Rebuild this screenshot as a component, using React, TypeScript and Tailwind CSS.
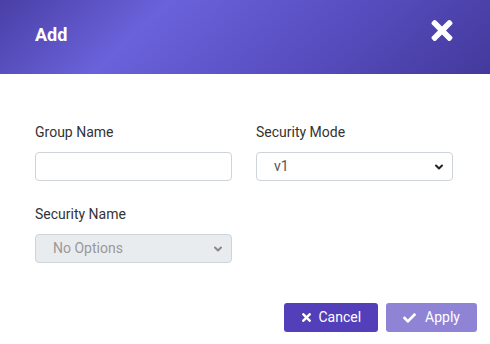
import { ChevronDown } from 'lucide-react';

function TimesIcon({ className }: { className?: string }) {
  return (
    <svg viewBox="0 80 352 352" className={className} fill="currentColor">
      <path d="M242.72 256l100.07-100.07c12.28-12.28 12.280-32.19 0-44.48l-22.24-22.24c-12.28-12.28-32.19-12.28-44.48 0L176 189.28 75.930 89.21c-12.28-12.28-32.19-12.28-44.48 0L9.21 111.45c-12.28 12.28-12.28 32.19 0 44.48L109.28 256 9.21 356.07c-12.28 12.28-12.28 32.19 0 44.48l22.24 22.24c12.28 12.28 32.2 12.28 44.48 0L176 322.72l100.07 100.07c12.28 12.28 32.2 12.28 44.48 0l22.240-22.24c12.28-12.28 12.28-32.19 0-44.48L242.72 256z" />
    </svg>
  );
}

function CheckIcon({ className }: { className?: string }) {
  return (
    <svg viewBox="0 64 512 384" className={className} fill="currentColor">
      <path d="M173.898 439.404l-166.4-166.4c-9.997-9.997-9.997-26.206 0-36.204l36.203-36.204c9.997-9.998 26.207-9.998 36.204 0L192 312.69 432.095 72.596c9.997-9.997 26.207-9.997 36.204 0l36.203 36.204c9.997 9.997 9.997 26.206 0 36.204l-294.4 294.401c-9.998 9.997-26.207 9.997-36.204-.001z" />
    </svg>
  );
}

function Field({ label, children }: { label: string; children: React.ReactNode }) {
  return (
    <div className="flex flex-col">
      <label className="text-[14px] leading-[21px] text-[#333] mb-[9px]">{label}</label>
      {children}
    </div>
  );
}

function Select({ value, disabled }: { value: string; disabled?: boolean }) {
  return (
    <div
      className={
        'h-[29px] rounded-[4px] border border-[#ced4da] flex items-center justify-between pl-[17px] pr-[7px] text-[14px] ' +
        (disabled ? 'bg-[#e9ecef] text-[#999]' : 'bg-white text-[#555]')
      }
    >
      <span>{value}</span>
      <ChevronDown className={'h-[12px] w-[12px] ' + (disabled ? 'text-[#888]' : 'text-[#222]')} strokeWidth={4} />
    </div>
  );
}

export default function App() {
  return (
    <div className="w-[490px] h-[344px] bg-white font-['Roboto',sans-serif] overflow-hidden">
      <div className="h-[74px] flex items-start justify-between pt-[20px] pl-[35px] pr-[37px] bg-[linear-gradient(137deg,#4a3fa6_0%,#6a62da_30%,#5a50c4_60%,#44399b_100%)]">
        <h2 className="text-white font-bold text-[18px] leading-[27px] mt-[1px]">Add</h2>
        <TimesIcon className="w-[22px] h-[21px] text-white" />
      </div>

      <div className="pt-[48px] pl-[35px] pr-[37px]">
        <div className="grid grid-cols-2 gap-x-6 gap-y-[23px]">
          <Field label="Group Name">
            <input className="h-[29px] rounded-[4px] border border-[#ced4da] bg-white outline-none px-3 text-[14px]" />
          </Field>
          <Field label="Security Mode">
            <Select value="v1" />
          </Field>
          <Field label="Security Name">
            <Select value="No Options" disabled />
          </Field>
        </div>
      </div>

      <div className="flex justify-end gap-2 pr-[13px] mt-[40px]">
        <button className="h-[29px] rounded-[3px] bg-[#533fba] text-white text-[14px] flex items-center pl-[18px] pr-[17px] gap-[7px]">
          <TimesIcon className="w-[9px] h-[9px]" />
          Cancel
        </button>
        <button className="h-[29px] rounded-[3px] bg-[#8f83d5] text-white text-[14px] flex items-center pl-[17px] pr-[17px] gap-[9px]">
          <CheckIcon className="w-[13px] h-[10px]" />
          Apply
        </button>
      </div>
    </div>
  );
}
